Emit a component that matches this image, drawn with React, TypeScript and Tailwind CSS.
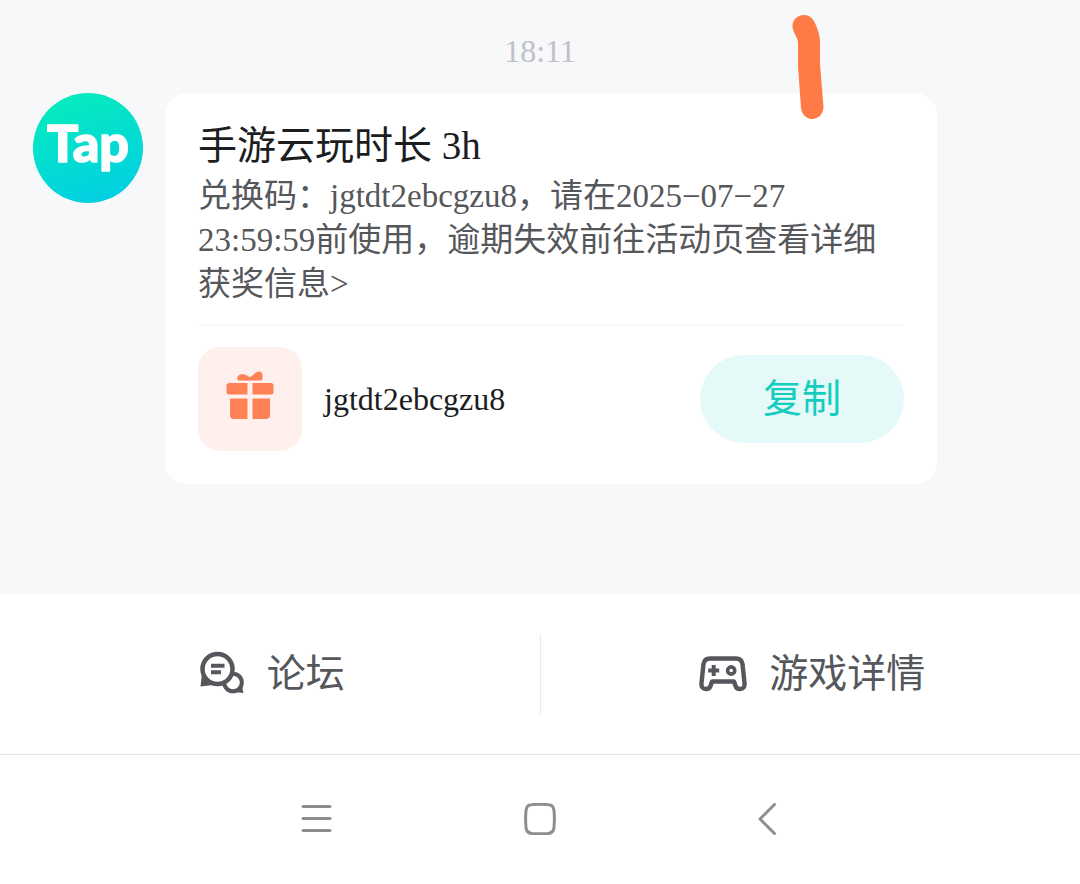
import type { ReactNode } from "react";

const message = {
  time: "18:11",
  title: "手游云玩时长 3h",
  body: "兑换码：jgtdt2ebcgzu8，请在2025−07−27 23:59:59前使用，逾期失效前往活动页查看详细获奖信息>",
  code: "jgtdt2ebcgzu8",
};

function TapAvatar() {
  return (
    <svg viewBox="0 0 110 110" className="size-[110px] shrink-0" role="img" aria-label="Tap">
      <defs>
        <linearGradient id="tap-bg" x1="0.3" y1="0" x2="0.65" y2="1">
          <stop offset="0" stopColor="#05ecbd" />
          <stop offset="1" stopColor="#02cfe3" />
        </linearGradient>
      </defs>
      <circle cx="55" cy="55" r="55" fill="url(#tap-bg)" />
      <text
        x="55"
        y="69"
        textAnchor="middle"
        fill="#fff"
        stroke="#fff"
        strokeWidth="1.5"
        strokeLinejoin="round"
        className="font-['Lato',sans-serif] text-[52px] font-black"
      >
        Tap
      </text>
    </svg>
  );
}

function GiftIcon() {
  return (
    <svg viewBox="0 0 56 56" className="size-14" fill="#ff8156" aria-hidden="true">
      <path d="M16 9.500C14 6.500 16 3.200 20 3.200C23.500 3 25.500 5 28 6.200C30.500 5.500 32 2.500 35 1C38 -0.500 40.500 1 40.500 4C40.800 6 40.500 8 39.500 9.500Z" />
      <path d="M7 12H25.500V23.500H7Q4.500 23.500 4.500 21V14.500Q4.500 12 7 12Z" />
      <path d="M30.500 12H49Q51.500 12 51.500 14.500V21Q51.500 23.500 49 23.500H30.500Z" />
      <path d="M8 27.500H25.500V48H12Q8 48 8 44Z" />
      <path d="M30.500 27.500H48V44Q48 48 44 48H30.500Z" />
    </svg>
  );
}

function ForumIcon() {
  return (
    <svg viewBox="0 0 46 47" className="h-[47px] w-[46px]" fill="none" aria-hidden="true">
      <circle cx="34" cy="31.500" r="8.800" stroke="#55575c" strokeWidth="4" />
      <path d="M42.500 33L44.500 42L35 41Z" fill="#55575c" />
      <path d="M3 23L1.500 35.500L14 34Z" fill="#55575c" />
      <circle cx="18.500" cy="18" r="15" fill="#fff" stroke="#55575c" strokeWidth="4.500" />
      <path d="M12 14.800H25.500M12 21.200H22" stroke="#55575c" strokeWidth="4" />
    </svg>
  );
}

function GamepadIcon() {
  return (
    <svg viewBox="0 0 48 36" className="h-9 w-12" fill="none" stroke="#55575c" aria-hidden="true">
      <path
        d="M11 2.500H37Q42.500 2.500 43.500 8L45.500 27Q46 33 41 33Q37.500 33 36.500 30L35 25.500H13L11.500 30Q10.500 33 7 33Q2 33 2.500 27L4.500 8Q5.500 2.500 11 2.500Z"
        strokeWidth="4.400"
        strokeLinejoin="round"
      />
      <path d="M14.700 9V20M9.200 14.500H20.200" strokeWidth="4" />
      <circle cx="32.200" cy="14.500" r="3.600" strokeWidth="3.600" />
    </svg>
  );
}

function FooterButton({ icon, label }: { icon: ReactNode; label: string }) {
  return (
    <button
      type="button"
      className="flex flex-1 items-center justify-center gap-[22px] pl-1 text-[39px] leading-[54px] text-[#55575c]"
    >
      {icon}
      <span>{label}</span>
    </button>
  );
}

function NavButton({ label, children }: { label: string; children: ReactNode }) {
  return (
    <button type="button" aria-label={label} className="flex items-center justify-center">
      <svg
        viewBox="0 0 32 32"
        className="size-8"
        fill="none"
        stroke="#8e8e8e"
        strokeWidth="3"
        strokeLinecap="round"
        strokeLinejoin="round"
        aria-hidden="true"
      >
        {children}
      </svg>
    </button>
  );
}

// finger-drawn marker stroke over the chat
function MarkerStroke() {
  return (
    <svg
      viewBox="0 0 36 108"
      className="pointer-events-none absolute top-3 left-[790px] h-[108px] w-9"
      fill="#ff7b45"
      aria-hidden="true"
    >
      <path d="M2.500 14C2.500 7 8 3 14 3C20 3 23 7 25 11C28 18 30 24 30 30L30 52L33.500 95C33.500 102 28 107 22.500 107C16 107 11.500 102 11 96L8 54V30C6.500 23 2.500 20 2.500 14Z" />
    </svg>
  );
}

export default function App() {
  return (
    <div className="relative flex min-h-screen flex-col bg-[#f7f8fa] font-['Liberation_Serif','Noto_Sans_CJK_SC',serif]">
      <main className="flex-1 pr-[143px] pb-[110px] pl-[33px]">
        <time className="-mr-[110px] block pt-[29px] text-center text-[32px] leading-[44px] text-[#bfc1c4]">
          {message.time}
        </time>

        <div className="mt-5 flex items-start gap-[22px]">
          <TapAvatar />
          <article className="min-w-0 flex-1 rounded-[22px] bg-white px-[33px] pt-[26px] pb-[33px]">
            <h1 className="text-[39px] leading-[54px] text-[#1c1d1f]">{message.title}</h1>
            <p className="mt-px text-[33px] leading-[44px] text-[#55575b]">{message.body}</p>

            <div className="mt-[18px] flex items-center border-t-2 border-[#f8f9fa] pt-[21px]">
              <div className="flex size-[104px] shrink-0 items-center justify-center rounded-[22px] bg-[#fff0ed]">
                <GiftIcon />
              </div>
              <span className="ml-[22px] text-[32px] leading-[44px] text-[#1c1d1f]">{message.code}</span>
              <button
                type="button"
                className="ml-auto h-[88px] w-[204px] rounded-full bg-[#e4f9f8] text-[39px] leading-[54px] text-[#15cdbf]"
              >
                复制
              </button>
            </div>
          </article>
        </div>
      </main>

      <footer className="bg-white">
        <div className="flex h-40 items-center">
          <FooterButton icon={<ForumIcon />} label="论坛" />
          <div className="h-20 w-px bg-[#e8e9ea]" />
          <FooterButton icon={<GamepadIcon />} label="游戏详情" />
        </div>
        <nav className="grid h-[130px] grid-cols-3 border-t border-[#e3e4e5] px-[204px] pb-0.5">
          <NavButton label="菜单">
            <path d="M3 3.500H30M3 15.500H30M3 27.500H30" />
          </NavButton>
          <NavButton label="主屏幕">
            <path d="M8 1.500Q16 0.800 24 1.500Q29.500 1.800 30 7.500Q30.800 16 30 24.500Q29.500 30 24 30.500Q16 31 8 30.500Q2.500 30 2 24.500Q1.200 16 2 7.500Q2.500 1.800 8 1.500Z" />
          </NavButton>
          <NavButton label="返回">
            <path d="M26.500 1.500L12 16L26.500 30.500" />
          </NavButton>
        </nav>
      </footer>

      <MarkerStroke />
    </div>
  );
}
